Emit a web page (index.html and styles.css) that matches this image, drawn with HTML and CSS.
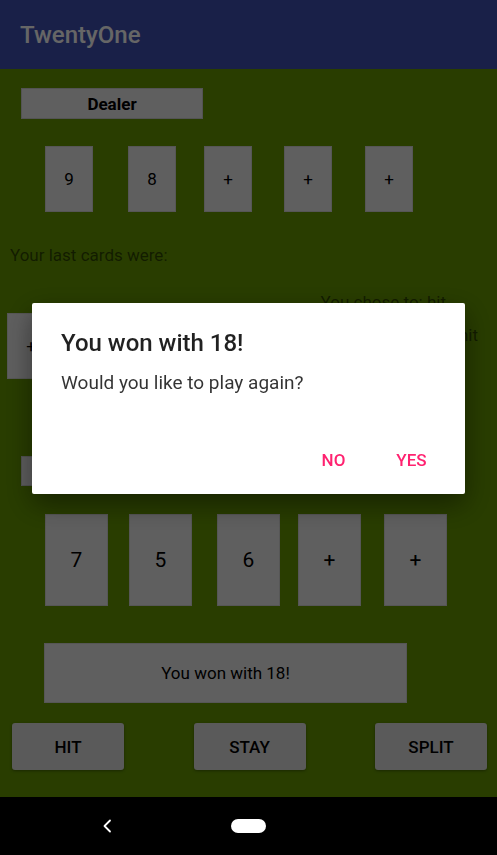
FILE: index.html
```html
<!DOCTYPE html>
<html>
<head>
<meta charset="utf-8">
<link rel="stylesheet" href="styles.css">
</head>
<body>
<div class="screen">
  <header class="appbar">TwentyOne</header>
  <main class="table">
    <div class="label dealer-label">Dealer</div>
    <div class="card-row dealer-row">
      <div class="card">9</div>
      <div class="card">8</div>
      <div class="card">+</div>
      <div class="card">+</div>
      <div class="card">+</div>
    </div>
    <div class="muted last-cards">Your last cards were:</div>
    <div class="middle">
      <div class="card small-card">+</div>
      <div class="choices">
        <div class="muted choice-you">You chose to: hit</div>
        <div class="muted choice-dealer">Dealer chose to: hit</div>
      </div>
    </div>
    <div class="label player-label">Player</div>
    <div class="card-row player-row">
      <div class="card big">7</div>
      <div class="card big">5</div>
      <div class="card big">6</div>
      <div class="card big">+</div>
      <div class="card big">+</div>
    </div>
    <div class="result">You won with 18!</div>
    <div class="actions">
      <button class="btn">HIT</button>
      <button class="btn">STAY</button>
      <button class="btn">SPLIT</button>
    </div>
  </main>
  <nav class="navbar">
    <svg class="back" width="10" height="14" viewBox="0 0 10 14"><polyline points="8,1.5 2.5,7 8,12.5" fill="none" stroke="#fff" stroke-width="1.8" stroke-linecap="round" stroke-linejoin="round"/></svg>
    <div class="home"></div>
  </nav>
</div>
<div class="scrim">
  <div class="dialog">
    <div class="dialog-title">You won with 18!</div>
    <div class="dialog-msg">Would you like to play again?</div>
    <div class="dialog-actions">
      <button class="dbtn">NO</button>
      <button class="dbtn">YES</button>
    </div>
  </div>
</div>
</body>
</html>
```
FILE: styles.css
```css
* { box-sizing: border-box; }
html, body { margin: 0; padding: 0; }
body {
  width: 497px;
  height: 855px;
  overflow: hidden;
  font-family: Roboto, "Liberation Sans", sans-serif;
  background: #000;
}
.screen {
  display: flex;
  flex-direction: column;
  height: 855px;
}
.appbar {
  height: 69px;
  flex: none;
  background: #3F51B5;
  color: #fff;
  font-size: 24px;
  font-weight: 500;
  padding-left: 20px;
  display: flex;
  align-items: center;
}
.table {
  flex: 1;
  background: #669900;
  display: flex;
  flex-direction: column;
  align-items: flex-start;
}
.label {
  width: 182px;
  background: #eeeeee;
  border: 1px solid #cfcfcf;
  display: flex;
  align-items: center;
  justify-content: center;
  font-size: 17px;
  font-weight: 700;
  color: #000;
}
.dealer-label {
  margin: 19px 0 0 21px;
  height: 31px;
}
.card-row { display: flex; }
.card {
  background: #eeeeee;
  border: 1px solid #d8d8d8;
  display: flex;
  align-items: center;
  justify-content: center;
  color: #000;
  font-size: 17px;
  flex: none;
}
.dealer-row {
  margin-top: 27px;
  padding-left: 45px;
}
.dealer-row .card { width: 48px; height: 66px; }
.dealer-row .card:nth-child(2) { margin-left: 35px; }
.dealer-row .card:nth-child(3) { margin-left: 28px; }
.dealer-row .card:nth-child(4) { margin-left: 32px; }
.dealer-row .card:nth-child(5) { margin-left: 33px; }
.muted {
  color: rgba(0, 0, 0, 0.54);
  font-size: 17px;
  line-height: 20px;
}
.last-cards {
  margin-top: 33px;
  padding-left: 10px;
}
.middle {
  align-self: stretch;
  display: flex;
  justify-content: space-between;
  align-items: flex-start;
  margin-top: 27px;
}
.small-card {
  width: 48px;
  height: 66px;
  margin: 21px 0 0 7px;
}
.choices {
  display: flex;
  flex-direction: column;
  align-items: flex-end;
  padding-right: 19px;
}
.choice-you { margin-right: 32px; }
.choice-dealer { margin-top: 13px; }
.player-label {
  margin: 77px 0 0 21px;
  height: 30px;
}
.player-row {
  margin-top: 28px;
  padding-left: 45px;
}
.player-row .card { width: 63px; height: 92px; font-size: 21px; }
.player-row .card:nth-child(2) { margin-left: 21px; }
.player-row .card:nth-child(3) { margin-left: 25px; }
.player-row .card:nth-child(4) { margin-left: 18px; }
.player-row .card:nth-child(5) { margin-left: 23px; }
.result {
  margin: 37px 0 0 44px;
  width: 363px;
  height: 60px;
  background: #eeeeee;
  border: 1px solid #d8d8d8;
  display: flex;
  align-items: center;
  justify-content: center;
  font-size: 17px;
  color: #000;
}
.actions {
  align-self: stretch;
  display: flex;
  justify-content: space-between;
  margin-top: 20px;
  padding: 0 10px 0 12px;
}
.btn {
  width: 112px;
  height: 47px;
  border: none;
  border-radius: 3px;
  background: #e0e0e0;
  box-shadow: 0 1px 3px rgba(0,0,0,0.35);
  font-family: Roboto, "Liberation Sans", sans-serif;
  font-size: 17px;
  font-weight: 500;
  color: #000;
  padding: 0;
}
.navbar {
  height: 58px;
  flex: none;
  background: #000;
  display: flex;
  align-items: center;
  padding-left: 102px;
}
.back { display: block; }
.home {
  width: 35px;
  height: 14px;
  border-radius: 7px;
  background: #fff;
  margin-left: 119px;
}
.scrim {
  position: fixed;
  left: 0;
  top: 0;
  width: 497px;
  height: 797px;
  background: rgba(0, 0, 0, 0.6);
  display: flex;
  align-items: center;
  justify-content: center;
}
.dialog {
  width: 433px;
  height: 191px;
  background: #fff;
  border-radius: 2px;
  box-shadow: 0 10px 28px rgba(0,0,0,0.45);
  padding: 26px 0 0 29px;
  display: flex;
  flex-direction: column;
}
.dialog-title {
  font-size: 24px;
  line-height: 28px;
  font-weight: 500;
  color: rgba(0, 0, 0, 0.87);
}
.dialog-msg {
  margin-top: 14px;
  font-size: 19px;
  line-height: 23px;
  color: rgba(0, 0, 0, 0.8);
}
.dialog-actions {
  margin-top: auto;
  margin-bottom: 13px;
  display: flex;
  justify-content: flex-end;
  gap: 1px;
  padding-right: 15px;
}
.dbtn {
  width: 77px;
  height: 43px;
  border: none;
  background: transparent;
  color: #ff2270;
  font-family: Roboto, "Liberation Sans", sans-serif;
  font-size: 17px;
  font-weight: 500;
  padding: 0;
}
```
